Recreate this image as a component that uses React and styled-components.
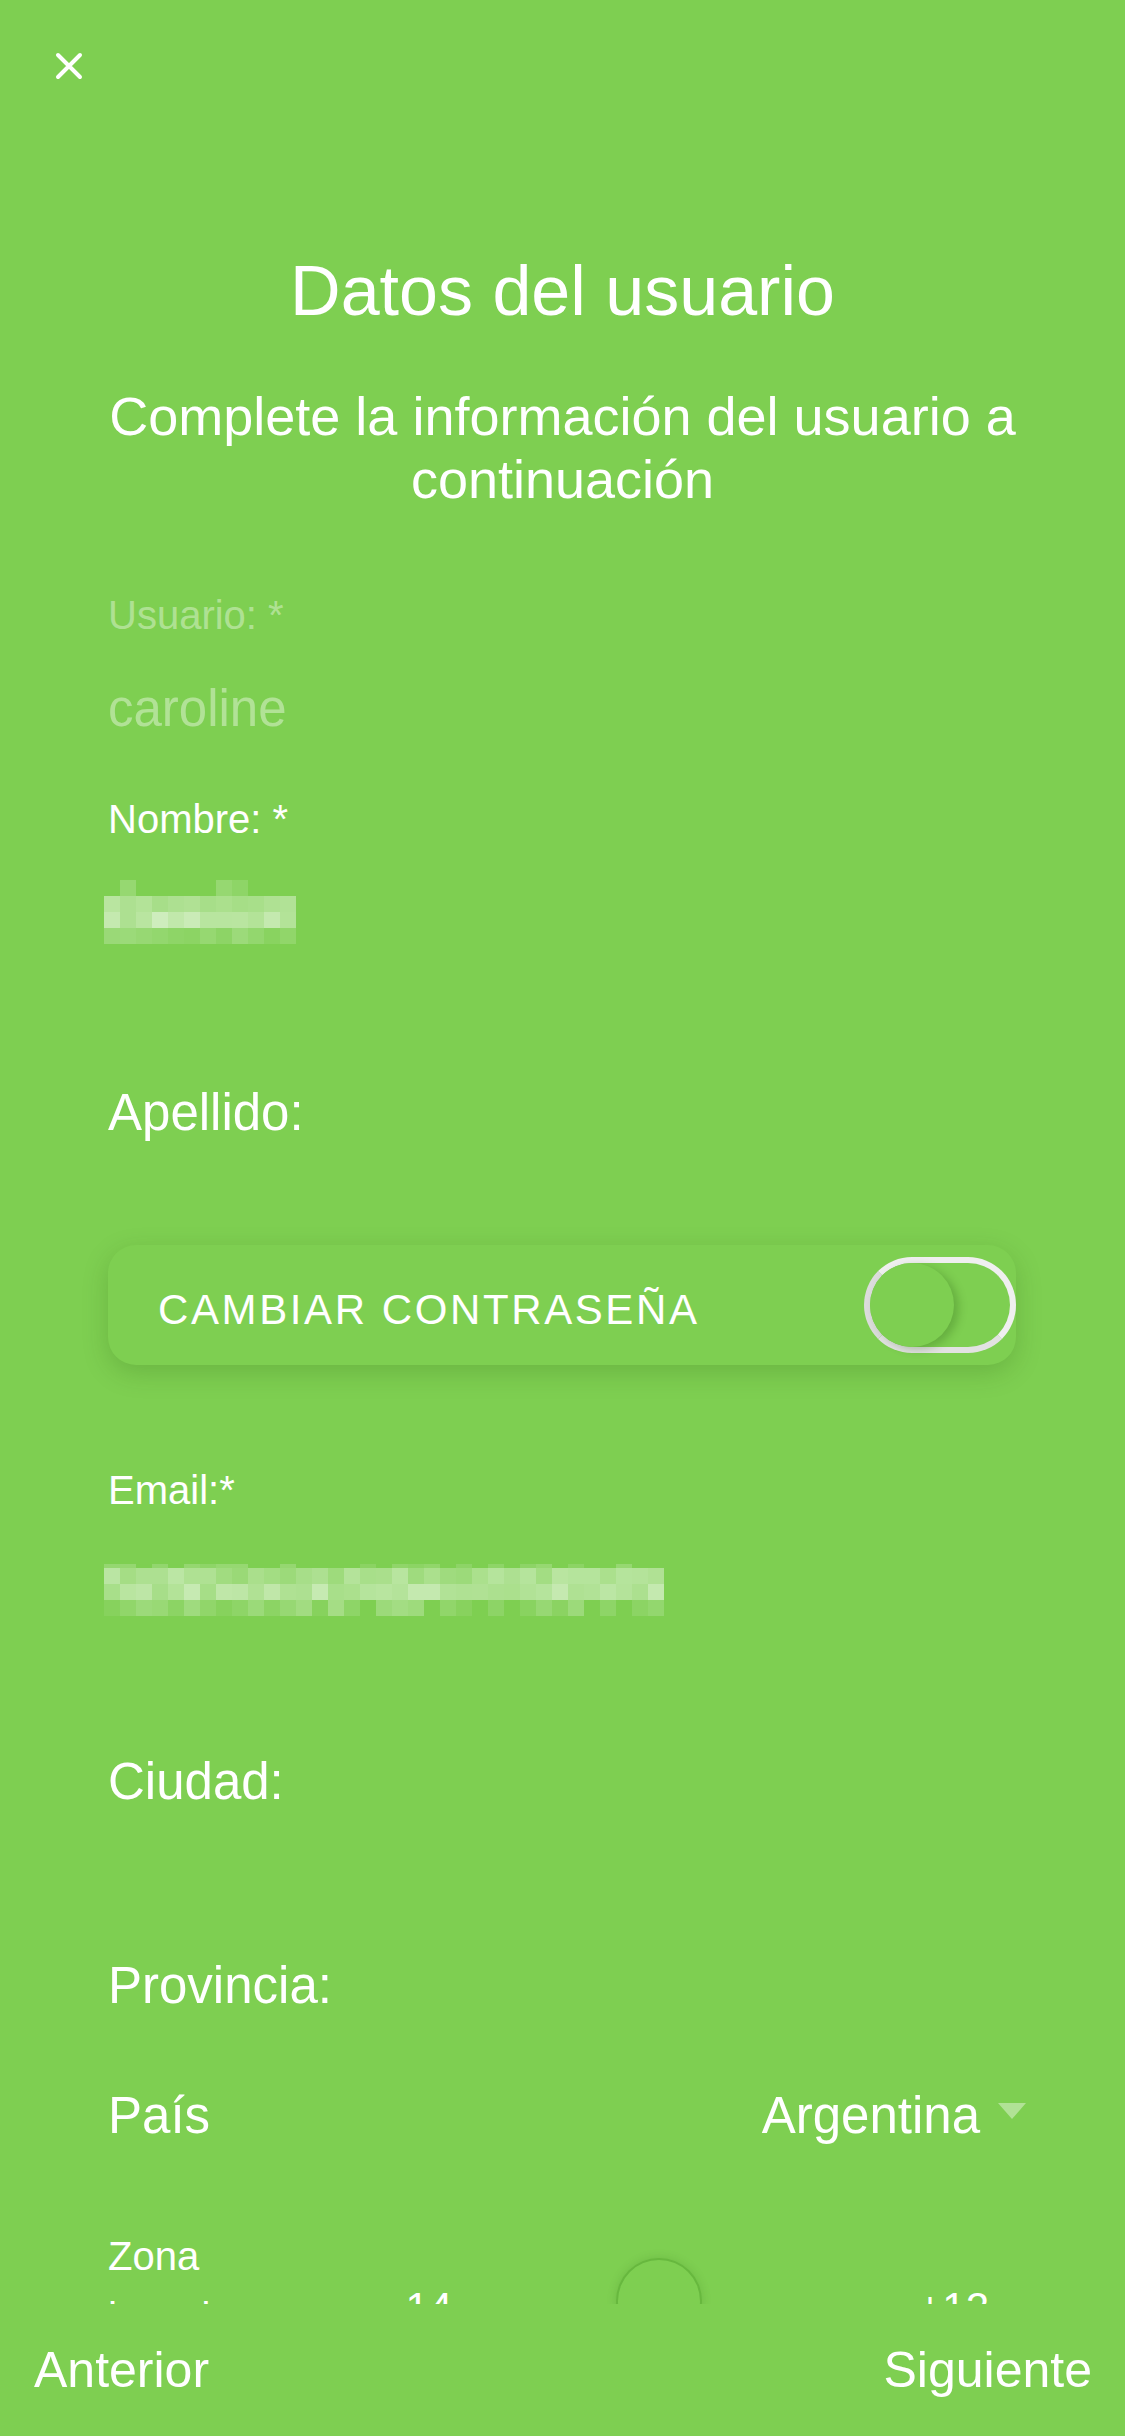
import styled, { createGlobalStyle } from 'styled-components';

const GREEN = '#7ecf51';
const FONT = `"Liberation Sans", Arial, Helvetica, sans-serif`;

const GlobalStyle = createGlobalStyle`
  html, body {
    margin: 0;
    padding: 0;
    background: ${GREEN};
  }
  body {
    font-family: ${FONT};
    color: #fff;
  }
`;

const Screen = styled.div`
  width: 1125px;
  height: 2436px;
  display: flex;
  flex-direction: column;
  background: ${GREEN};
  overflow: hidden;
`;

const Scroll = styled.div`
  flex: none;
  height: 2304px;
  overflow: hidden;
`;

const CloseButton = styled.button`
  display: block;
  margin: 52px 0 0 55px;
  padding: 0;
  width: 28px;
  height: 28px;
  background: none;
  border: 0;
  color: #fff;
`;

const Title = styled.h1`
  margin: 169px 0 0;
  font-size: 70px;
  line-height: 84px;
  font-weight: 400;
  text-align: center;
`;

const Subtitle = styled.p`
  margin: 52px 0 0;
  padding: 0 100px;
  font-size: 54px;
  line-height: 63px;
  text-align: center;
`;

const Form = styled.div`
  padding: 0 109px 0 108px;
`;

const Label = styled.div`
  margin-top: ${(p) => p.$mt || 0}px;
  font-size: 40px;
  line-height: 48px;
  color: ${(p) => (p.$muted ? 'rgba(255,255,255,0.4)' : '#fff')};
`;

const Value = styled.div`
  margin-top: ${(p) => p.$mt || 0}px;
  font-size: 51px;
  line-height: 60px;
  color: ${(p) => (p.$muted ? 'rgba(255,255,255,0.4)' : '#fff')};
`;

const Mosaic = styled.div`
  margin-top: ${(p) => p.$mt || 0}px;
  display: grid;
  grid-template-columns: repeat(${(p) => p.$cols}, 16px);
  margin-left: -4px;
`;

const Sliver = styled.div`
  align-self: end;
  height: ${(p) => p.$h || 16}px;
`;

const Card = styled.div`
  margin-top: 102px;
  height: 120px;
  display: flex;
  align-items: center;
  justify-content: space-between;
  padding-left: 50px;
  border-radius: 28px;
  background: ${GREEN};
  box-shadow: 0 8px 26px rgba(40, 90, 20, 0.22);
`;

const CardText = styled.span`
  margin-top: 9px;
  font-size: 42px;
  line-height: 50px;
  letter-spacing: 2.6px;
`;

const Toggle = styled.div`
  box-sizing: border-box;
  width: 152px;
  height: 96px;
  border-radius: 48px;
  border: 6px solid #efefef;
  border-bottom-color: #e2e2e2;
  border-left-color: #dcdcdc;
  display: flex;
  align-items: center;
`;

const Knob = styled.div`
  width: 84px;
  height: 84px;
  border-radius: 50%;
  background: ${GREEN};
  box-shadow: 5px 3px 8px rgba(30, 80, 10, 0.25);
`;

const Row = styled.div`
  margin-top: ${(p) => p.$mt || 0}px;
  margin-right: -10px;
  display: flex;
  align-items: center;
  justify-content: space-between;
  font-size: 51px;
  line-height: 60px;
`;

const Picker = styled.div`
  display: flex;
  align-items: center;
  gap: 18px;
`;

const Caret = styled.span`
  width: 0;
  height: 0;
  border-left: 14.5px solid transparent;
  border-right: 14.5px solid transparent;
  border-top: 16px solid rgba(255, 255, 255, 0.4);
  margin-top: -10px;
`;

const SliderRow = styled.div`
  margin-top: 80px;
  display: flex;
  padding-right: 27px;
`;

const SliderLabel = styled.div`
  width: 273px;
  font-size: 40px;
  line-height: 61px;
`;

const SliderBody = styled.div`
  flex: 1;
  height: 164px;
  display: flex;
  align-items: center;
  gap: 20px;
`;

const Bound = styled.span`
  font-size: 42px;
  line-height: 50px;
`;

const Track = styled.div`
  position: relative;
  flex: 1;
  height: 4px;
`;

const Thumb = styled.div`
  position: absolute;
  top: 50%;
  width: 86px;
  height: 86px;
  margin: -50px 0 0 -43px;
  border-radius: 50%;
  box-sizing: border-box;
  border: 2px solid rgba(60, 140, 30, 0.35);
  background: ${GREEN};
  box-shadow: 0 0 10px rgba(40, 100, 20, 0.18);
`;

const Footer = styled.div`
  flex: 1;
  display: flex;
  justify-content: space-between;
  padding: 36px 33px 0 34px;
  font-size: 50px;
  line-height: 60px;
`;

const FooterButton = styled.span`
  color: #fff;
`;

// pixel blocks that hide the personal data
function seeded(seed) {
  let s = seed;
  return () => {
    s = (s * 9301 + 49297) % 233280;
    return s / 233280;
  };
}

function Pixelated({ cols, rows, seed, mt }) {
  const rnd = seeded(seed);
  const cells = [];
  rows.forEach((row, r) => {
    for (let c = 0; c < cols; c++) {
      const on = row.only ? row.only.includes(c) : rnd() > (row.skip || 0);
      const a = on ? row.min + rnd() * (row.max - row.min) : 0;
      cells.push(
        <Sliver
          key={`${r}-${c}`}
          $h={row.h}
          style={{ background: `rgba(255,255,255,${a.toFixed(2)})` }}
        />
      );
    }
  });
  return (
    <Mosaic $cols={cols} $mt={mt} style={{ gridTemplateRows: rows.map((r) => `${r.h || 16}px`).join(' ') }}>
      {cells}
    </Mosaic>
  );
}

const nameRows = [
  { only: [1, 7, 8], min: 0.12, max: 0.2 },
  { min: 0.3, max: 0.48 },
  { min: 0.35, max: 0.62 },
  { skip: 0.15, min: 0.08, max: 0.25 },
];

const emailRows = [
  { h: 4, skip: 0.6, min: 0.1, max: 0.2 },
  { min: 0.22, max: 0.48 },
  { min: 0.3, max: 0.6 },
  { skip: 0.1, min: 0.05, max: 0.3 },
];

export default function App() {
  return (
    <>
      <GlobalStyle />
      <Screen>
        <Scroll>
          <CloseButton aria-label="Cerrar">
            <svg width="28" height="28" viewBox="0 0 28 28">
              <path d="M3 3 L25 25 M25 3 L3 25" stroke="#fff" strokeWidth="4" strokeLinecap="round" />
            </svg>
          </CloseButton>
          <Title>Datos del usuario</Title>
          <Subtitle>Complete la información del usuario a continuación</Subtitle>
          <Form>
            <Label $mt={80} $muted>Usuario: *</Label>
            <Value $mt={40} $muted>caroline</Value>
            <Label $mt={56}>Nombre: *</Label>
            <Pixelated cols={12} rows={nameRows} seed={17} mt={37} />
            <Value $mt={139}>Apellido:</Value>
            <Card>
              <CardText>CAMBIAR CONTRASEÑA</CardText>
              <Toggle>
                <Knob />
              </Toggle>
            </Card>
            <Label $mt={101}>Email:*</Label>
            <Pixelated cols={35} rows={emailRows} seed={42} mt={50} />
            <Value $mt={136}>Ciudad:</Value>
            <Value $mt={144}>Provincia:</Value>
            <Row $mt={70}>
              <span>País</span>
              <Picker>
                <span>Argentina</span>
                <Caret />
              </Picker>
            </Row>
            <SliderRow>
              <SliderLabel>
                Zona
                <br />
                horaria
              </SliderLabel>
              <SliderBody>
                <Bound>−14</Bound>
                <Track>
                  <Thumb style={{ left: '44%' }} />
                </Track>
                <Bound>+12</Bound>
              </SliderBody>
            </SliderRow>
          </Form>
        </Scroll>
        <Footer>
          <FooterButton>Anterior</FooterButton>
          <FooterButton>Siguiente</FooterButton>
        </Footer>
      </Screen>
    </>
  );
}
